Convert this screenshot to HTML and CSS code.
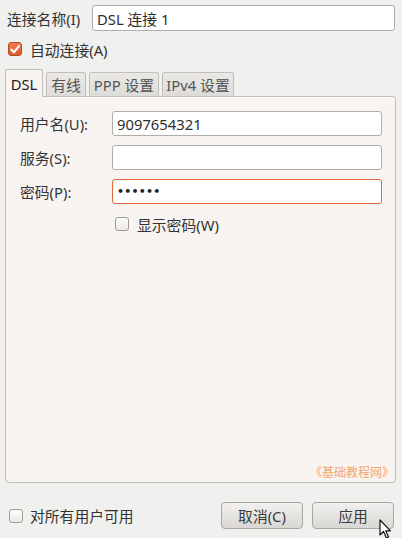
FILE: index.html
```html
<!DOCTYPE html>
<html lang="zh">
<head>
<meta charset="utf-8">
<link rel="stylesheet" href="styles.css">
</head>
<body>
<div class="win">
  <div class="row-name">
    <span class="lbl">连接名称(I)</span>
    <div class="entry name-entry">DSL 连接 1</div>
  </div>
  <div class="row-auto">
    <span class="cb checked">
      <svg width="13" height="13" viewBox="0 0 13 13"><path d="M2.5 6.5 L5.3 9.5 L10.8 2.8" fill="none" stroke="#fff" stroke-width="2.2" stroke-linecap="round" stroke-linejoin="round"/></svg>
    </span>
    <span class="cb-text">自动连接(A)</span>
  </div>
  <div class="tabs">
    <div class="tab active">DSL</div>
    <div class="tab">有线</div>
    <div class="tab">PPP 设置</div>
    <div class="tab">IPv4 设置</div>
  </div>
  <div class="panel">
    <div class="form">
      <div class="frow"><span class="flbl">用户名(U):</span><div class="entry fentry">9097654321</div></div>
      <div class="frow"><span class="flbl">服务(S):</span><div class="entry fentry"></div></div>
      <div class="frow"><span class="flbl">密码(P):</span><div class="entry fentry focus"><span class="dots">••••••</span></div></div>
      <div class="show-row"><span class="cb"></span><span class="cb-text">显示密码(W)</span></div>
    </div>
    <div class="watermark">《基础教程网》</div>
  </div>
  <div class="bottom">
    <div class="all-users"><span class="cb"></span><span class="cb-text">对所有用户可用</span></div>
    <div class="buttons">
      <div class="btn">取消(C)</div>
      <div class="btn">应用</div>
    </div>
  </div>
  <svg class="cursor" width="14" height="20" viewBox="0 0 14 20"><path d="M1 1 L1 16 L4.5 12.5 L7.5 19 L9.5 18 L6.8 11.8 L11.5 11.8 Z" fill="#fff" stroke="#111" stroke-width="1.2" stroke-linejoin="round"/></svg>
</div>
</body>
</html>
```
FILE: styles.css
```css
html, body {
  margin: 0;
  padding: 0;
  background: #f0f0ee;
}
body {
  font-family: "Noto Sans", "Noto Sans CJK SC", sans-serif;
  font-size: 14.8px;
  color: #333;
}
.win {
  position: relative;
  width: 402px;
  height: 538px;
  overflow: hidden;
}
.row-name {
  display: flex;
  align-items: center;
  padding: 5px 7px 0 7px;
  height: 26px;
}
.lbl {
  width: 85px;
}
.entry {
  box-sizing: border-box;
  background: #fff;
  border: 1px solid #b0aeab;
  border-radius: 3px;
  display: flex;
  align-items: center;
  padding: 0 4px;
  color: #2e2e2e;
}
.name-entry {
  width: 303px;
  height: 26px;
}
.row-auto {
  display: flex;
  align-items: center;
  margin-top: 11px;
  padding-left: 8px;
  height: 14px;
}
.cb {
  box-sizing: border-box;
  width: 14px;
  height: 14px;
  border: 1px solid #9d9a96;
  border-radius: 3px;
  background: linear-gradient(#fdfdfc, #eceae8);
  display: inline-flex;
  align-items: center;
  justify-content: center;
  flex: none;
}
.cb.checked {
  background: linear-gradient(#ee7a52, #dc5a2e);
  border-color: #b84a22;
}
.cb-text {
  margin-left: 8px;
}
.tabs {
  display: flex;
  align-items: flex-end;
  margin-top: 13px;
  padding-left: 5px;
  height: 27px;
  gap: 3px;
}
.tab {
  box-sizing: border-box;
  height: 24px;
  border: 1px solid #c2bfbb;
  border-bottom: none;
  border-radius: 3px 3px 0 0;
  background: linear-gradient(#ebe9e6, #dedcd9);
  color: #555;
  display: flex;
  align-items: center;
  justify-content: center;
  padding: 0;
}
.tab.active {
  height: 28px;
  margin-bottom: -1px;
  background: #f8f4f2;
  color: #222;
  z-index: 1;
  width: 38px;
}
.tab:nth-child(2) { width: 40px; }
.tab:nth-child(3) { width: 70px; }
.tab:nth-child(4) { width: 72px; }
.panel {
  box-sizing: border-box;
  margin-left: 5px;
  width: 391px;
  height: 387px;
  background: #f8f4f2;
  border: 1px solid #c2bfbb;
  border-radius: 0 3px 4px 4px;
  display: flex;
  flex-direction: column;
  justify-content: space-between;
}
.form {
  padding: 14px 0 0 14px;
  display: flex;
  flex-direction: column;
  gap: 9px;
}
.frow {
  display: flex;
  align-items: center;
  height: 25px;
}
.flbl {
  width: 92px;
}
.fentry {
  width: 270px;
  height: 25px;
}
.fentry.focus {
  border-color: #e0683a;
}
.dots {
  font-family: "DejaVu Sans", sans-serif;
  font-size: 11px;
  font-weight: bold;
  letter-spacing: 0.2px;
  color: #222;
}
.show-row {
  display: flex;
  align-items: center;
  margin-top: 3px;
  padding-left: 95px;
  height: 16px;
}
.watermark {
  align-self: flex-end;
  font-size: 12px;
  color: #f6a66a;
  padding: 0 0 1px 0;
  margin-right: 1px;
}
.bottom {
  display: flex;
  align-items: center;
  justify-content: space-between;
  margin-top: 19px;
  padding: 0 8px 0 9px;
  height: 27px;
}
.all-users {
  display: flex;
  align-items: center;
}
.all-users .cb-text {
  margin-left: 7px;
}
.buttons {
  display: flex;
  gap: 9px;
}
.btn {
  box-sizing: border-box;
  width: 82px;
  height: 27px;
  border: 1px solid #a9a6a2;
  border-radius: 4px;
  background: linear-gradient(#f2f1ef, #d9d7d4);
  display: flex;
  align-items: center;
  justify-content: center;
  color: #3a3a3a;
}
.cursor {
  position: absolute;
  left: 379px;
  top: 519px;
}
```
